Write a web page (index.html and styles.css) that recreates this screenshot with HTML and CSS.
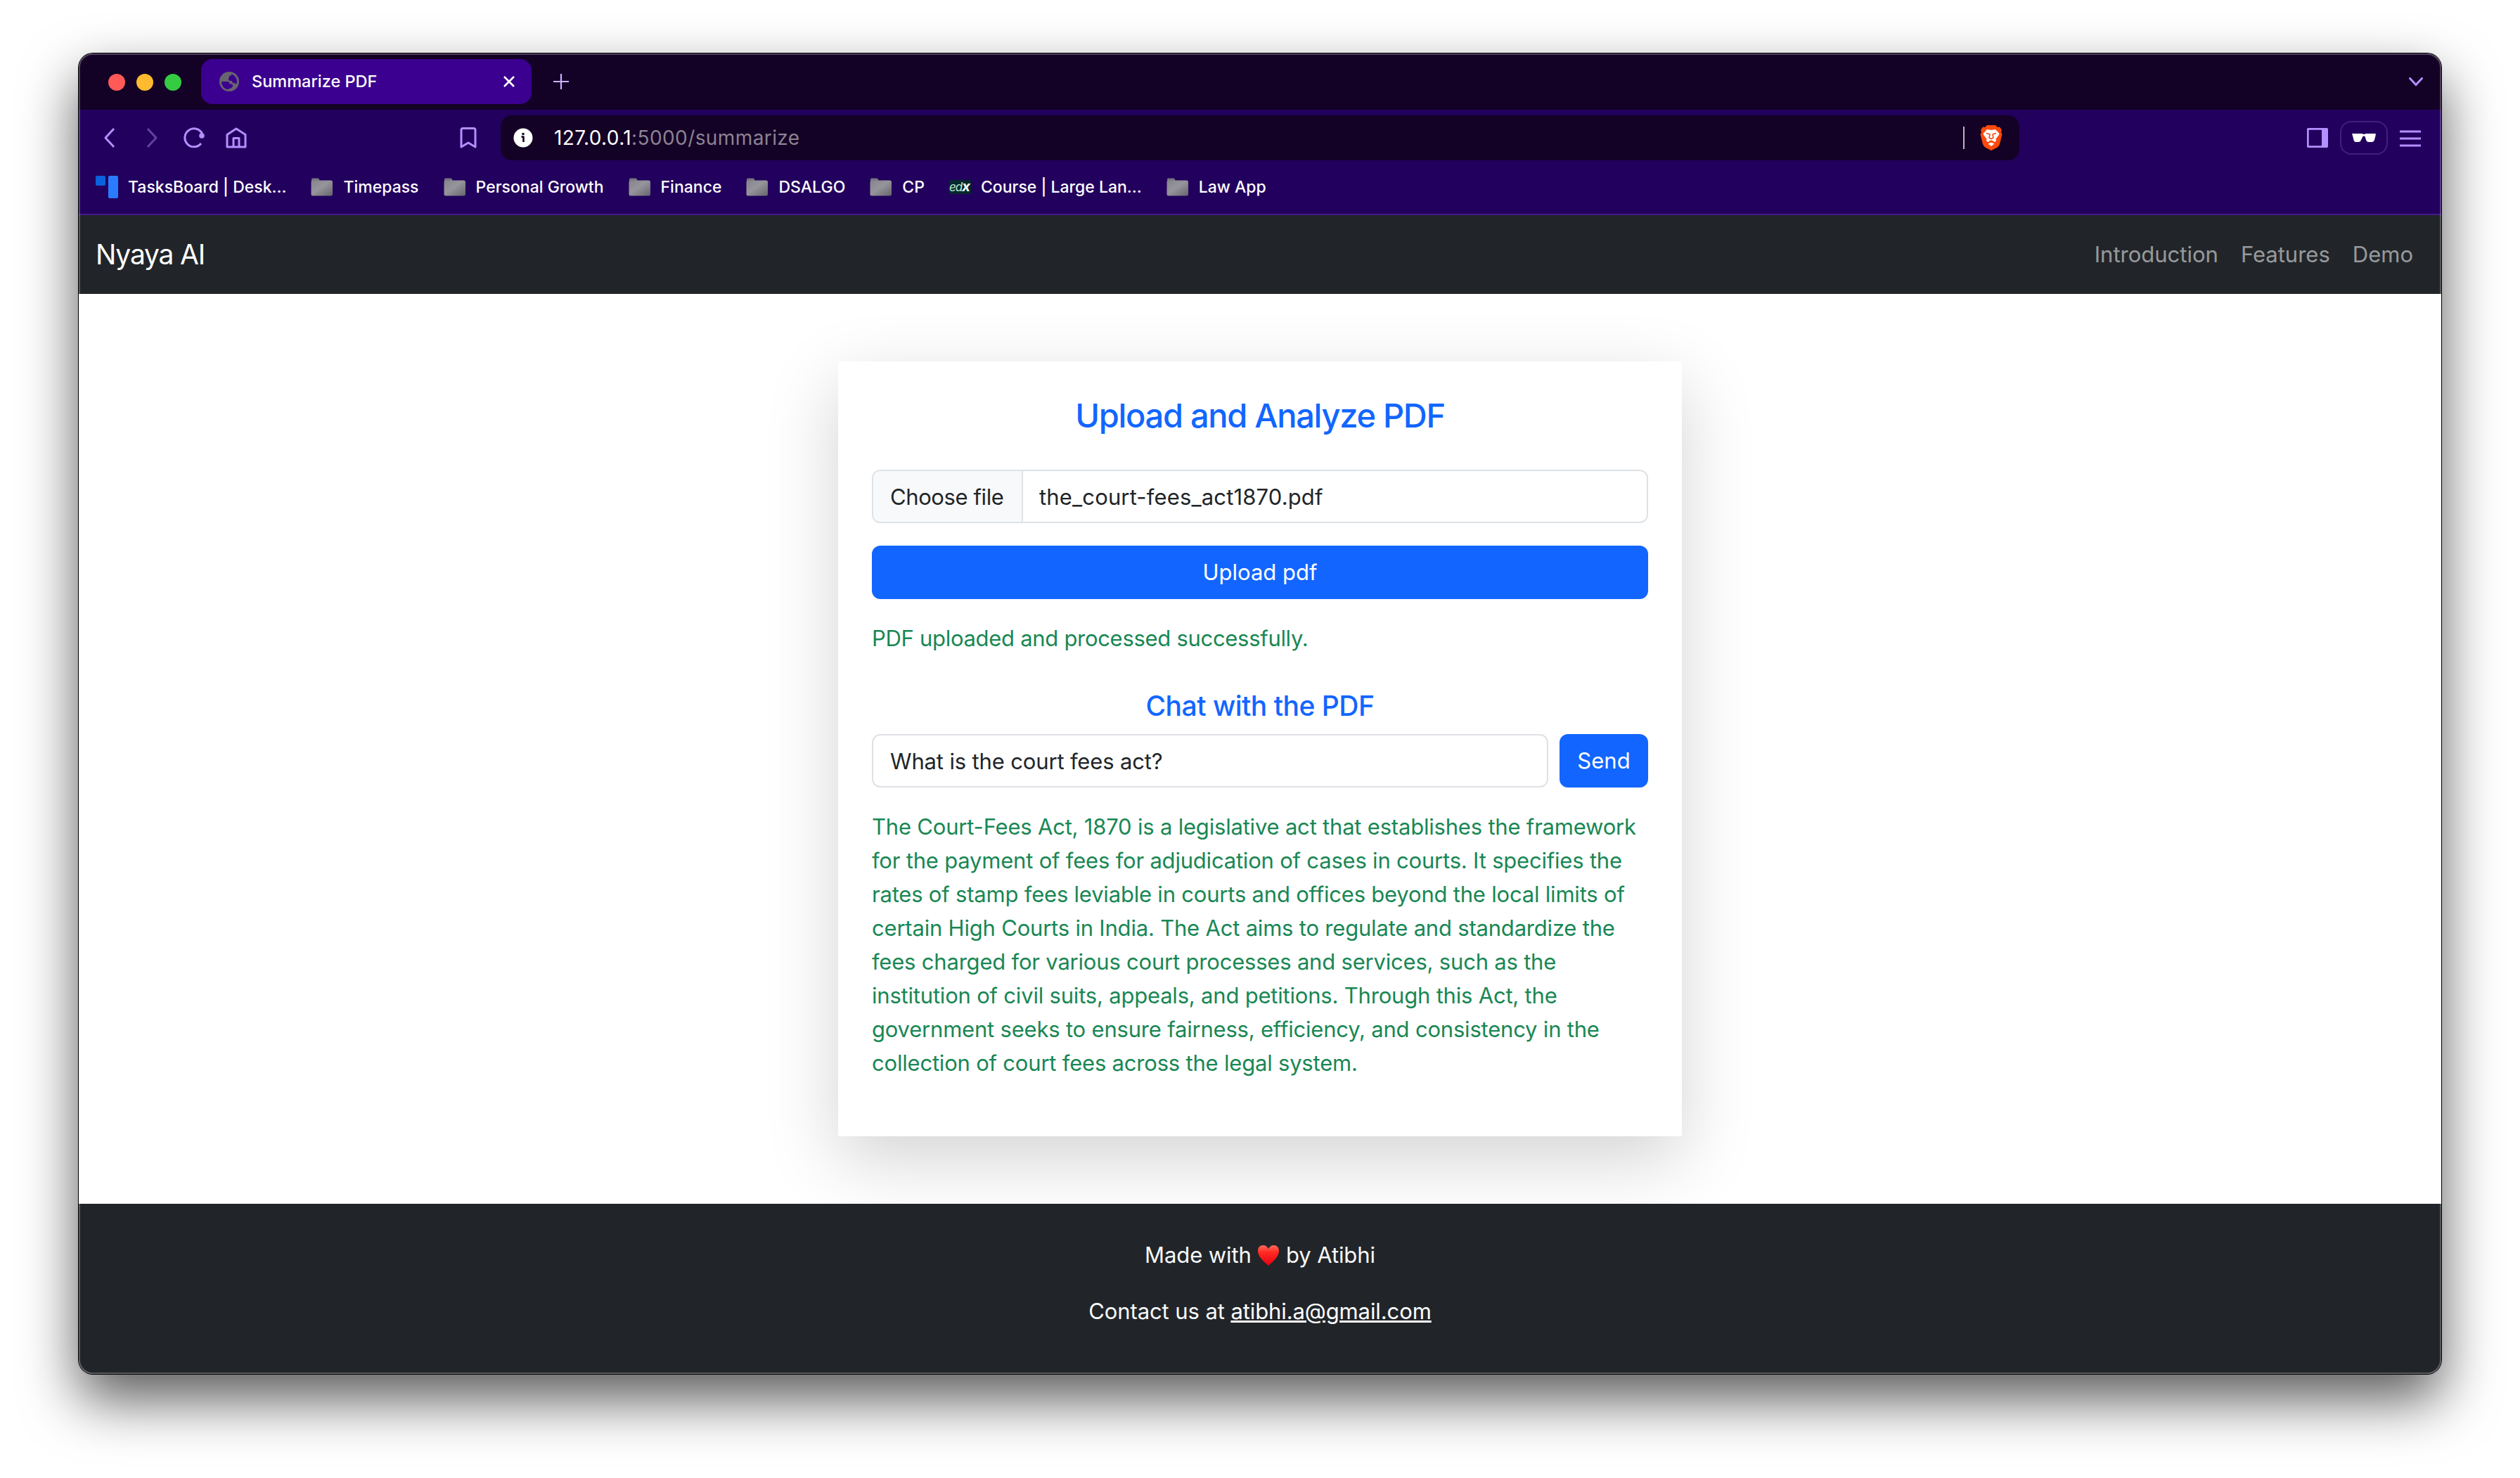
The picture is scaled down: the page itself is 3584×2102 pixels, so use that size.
FILE: index.html
```
<!DOCTYPE html>
<html lang="en">

<head>
    <meta charset="UTF-8">
    <title>Summarize PDF</title>
    <link rel="stylesheet" href="styles.css">
</head>

<body>
    <svg class="defs" width="0" height="0">
        <defs>
            <linearGradient id="folder-fill" x1="0" y1="0" x2="1" y2="1">
                <stop offset="0" stop-color="#85848c" />
                <stop offset="0.45" stop-color="#96959c" />
                <stop offset="1" stop-color="#66656c" />
            </linearGradient>
            <linearGradient id="heart-fill" x1="0" y1="0" x2="0" y2="1">
                <stop offset="0" stop-color="#ff6a5e" />
                <stop offset="0.35" stop-color="#ff2a22" />
                <stop offset="1" stop-color="#e30010" />
            </linearGradient>
            <symbol id="folder" viewBox="0 0 32 26">
                <path d="M1 7V2Q1 .5 2.500 .5H10q1.500 0 2 1.500l.5 2v3z" fill="#77757f" />
                <rect x="0.500" y="3.500" width="30.500" height="22" rx="2.500" fill="url(#folder-fill)" />
            </symbol>
        </defs>
    </svg>

    <div class="window">
        <div class="tab-strip">
            <div class="lights">
                <span class="light red"></span>
                <span class="light yellow"></span>
                <span class="light green"></span>
            </div>
            <div class="tab">
                <svg width="28" height="28" viewBox="0 0 28 28">
                    <circle cx="14" cy="14" r="14" fill="#67646f" />
                    <path d="M3 14h8c2.500 0 3.500 1.500 3.500 3.500h2c2 0 2.500 1 2.500 2.500 0 2-3 4-7 5C7 24.500 3 20 3 14z" fill="#3b008f" />
                    <path d="M17 3.500c4.500 1.300 8 5 8 10.500 0 1-.2 2.500-.6 3.500-1.400-.3-1.900-1.500-3.400-1.500-2.500 0-3-1-3-3h-2c-2 0-3-1-3-2.500s1-2 1-3.500S15.500 5.500 17 5.500z" fill="#3b008f" />
                </svg>
                <span class="tab-title">Summarize PDF</span>
                <svg width="16" height="16" viewBox="0 0 16 16">
                    <path d="M1 1l14 14M15 1L1 15" stroke="#fff" stroke-width="2.600" />
                </svg>
            </div>
            <svg class="new-tab" width="22" height="22" viewBox="0 0 22 22">
                <path d="M11 0v22M0 11h22" stroke="#c9b5ff" stroke-width="2.200" />
            </svg>
            <svg class="tab-menu" width="20" height="13" viewBox="0 0 20 13">
                <path d="M1.500 1.500L10 10.500l8.500-9" fill="none" stroke="#b48fff" stroke-width="3" stroke-linecap="round" />
            </svg>
        </div>

        <div class="toolbar">
            <div class="nav-icons">
                <svg width="30" height="30" viewBox="0 0 30 30">
                    <path d="M21 2L9 15l12 13" />
                </svg>
                <svg class="dim" width="30" height="30" viewBox="0 0 30 30">
                    <path d="M9 2l12 13L9 28" />
                </svg>
                <svg width="30" height="30" viewBox="0 0 30 30">
                    <path d="M25 23A13 13 0 1 1 26.500 9" />
                    <circle cx="26" cy="12" r="3.800" class="solid" />
                </svg>
                <svg width="30" height="30" viewBox="0 0 30 30">
                    <path d="M2 10.500L15 2l13 8.500V28H2zM11 28V15.500h8V28" />
                </svg>
            </div>
            <svg class="bookmark-icon" width="24" height="30" viewBox="0 0 24 30">
                <path d="M2 28V4q0-2.500 2.500-2.500h15Q22 1.500 22 4v24l-10-6z" />
            </svg>
            <div class="address-bar">
                <svg width="28" height="28" viewBox="0 0 28 28">
                    <circle cx="14" cy="14" r="13.500" fill="#fff" />
                    <path d="M11.500 12.500h3v7.500" fill="none" stroke="#140126" stroke-width="2.600" />
                    <circle cx="14" cy="8.500" r="1.800" fill="#140126" />
                </svg>
                <span class="url"><b>127.0.0.1</b>:5000/summarize</span>
                <span class="divider"></span>
                <svg width="32" height="36" viewBox="0 0 32 36">
                    <path d="M10 0h12l3 3 3-.5L31 7l-1 3 1.500 3L28 27q-1 3-4 5l-8 4-8-4q-3-2-4-5L.5 13 2 10 1 7l3-4.500L7 3z" fill="#fb4a0b" />
                    <path d="M10 6l6 1 6-1 5.500 6-1 2.500-4 5 .5 3-2.500 1.500L17 21.500h-2L11.500 24 9 22.500l.5-3-4-5-1-2.500z" fill="#fff" />
                    <path d="M16 24.500l4.500 2-4.500 3.500-4.500-3.500z" fill="#fff" />
                    <path d="M9 11.500l5 1.500-1 5 3 1.500 3-1.500-1-5 5-1.500" fill="none" stroke="#fb4a0b" stroke-width="1.600" />
                </svg>
            </div>
            <div class="right-icons">
                <svg width="30" height="28" viewBox="0 0 30 28">
                    <rect x="1.200" y="1.200" width="27.600" height="25.600" rx="2" />
                    <rect x="21" y="1" width="8" height="26" class="solid" />
                </svg>
                <span class="private">
                    <svg width="34" height="12" viewBox="0 0 34 12">
                        <path d="M1 0h13l3 1 3-1h13l1 .5-.5 2.500-1.500 6q-1 3-4 3h-4q-3 0-4-3l-1.500-5q-1.500-.8-3 0L13 9q-1 3-4 3H6q-3 0-3.500-3L1 3 0 .5z" class="glasses" />
                    </svg>
                </span>
                <svg class="menu" width="30" height="24" viewBox="0 0 30 24">
                    <path d="M0 2h30M0 12h30M0 22h30" />
                </svg>
            </div>
        </div>

        <div class="bookmarks">
            <div class="bookmark">
                <svg width="32" height="32" viewBox="0 0 32 32">
                    <rect width="14" height="14" rx="2" fill="#0a62dc" />
                    <rect x="18" width="14" height="32" rx="2" fill="#2a7cff" />
                </svg>
                <span>TasksBoard | Desk...</span>
            </div>
            <div class="bookmark"><svg width="32" height="26"><use href="#folder" /></svg><span>Timepass</span></div>
            <div class="bookmark"><svg width="32" height="26"><use href="#folder" /></svg><span>Personal Growth</span></div>
            <div class="bookmark"><svg width="32" height="26"><use href="#folder" /></svg><span>Finance</span></div>
            <div class="bookmark"><svg width="32" height="26"><use href="#folder" /></svg><span>DSALGO</span></div>
            <div class="bookmark"><svg width="32" height="26"><use href="#folder" /></svg><span>CP</span></div>
            <div class="bookmark"><i class="edx">ed<b>x</b></i><span>Course | Large Lan...</span></div>
            <div class="bookmark"><svg width="32" height="26"><use href="#folder" /></svg><span>Law App</span></div>
        </div>

        <nav class="navbar">
            <a class="brand">Nyaya AI</a>
            <div class="nav-links">
                <a>Introduction</a>
                <a>Features</a>
                <a>Demo</a>
            </div>
        </nav>

        <main class="content">
            <div class="card">
                <h4>Upload and Analyze PDF</h4>
                <div class="form-control file">
                    <span class="file-button">Choose file</span>
                    <span class="file-name">the_court-fees_act1870.pdf</span>
                </div>
                <div class="button upload">Upload pdf</div>
                <p class="success status">PDF uploaded and processed successfully.</p>
                <h5>Chat with the PDF</h5>
                <div class="chat-row">
                    <div class="form-control question">What is the court fees act?</div>
                    <div class="button send">Send</div>
                </div>
                <p class="success answer">
                    The Court-Fees Act, 1870 is a legislative act that establishes the framework<br>
                    for the payment of fees for adjudication of cases in courts. It specifies the<br>
                    rates of stamp fees leviable in courts and offices beyond the local limits of<br>
                    certain High Courts in India. The Act aims to regulate and standardize the<br>
                    fees charged for various court processes and services, such as the<br>
                    institution of civil suits, appeals, and petitions. Through this Act, the<br>
                    government seeks to ensure fairness, efficiency, and consistency in the<br>
                    collection of court fees across the legal system.
                </p>
            </div>
        </main>

        <footer class="footer">
            <p>Made with <svg class="heart" width="32" height="30" viewBox="0 0 32 30"><path d="M16 30C9 24 1 17 1 9 1 4 4 1 8.500 1 12 1 14.500 3 16 6c1.500-3 4-5 7.500-5C28 1 31 4 31 9c0 8-8 15-15 21z" fill="url(#heart-fill)" /></svg> by Atibhi</p>
            <p>Contact us at <a>atibhi.a@gmail.com</a></p>
        </footer>
    </div>
</body>

</html>
```
FILE: styles.css
```
* {
    box-sizing: border-box;
}

body {
    margin: 0;
    padding: 76px 112px 148px;
    background-color: #fff;
    font-family: Inter, "Liberation Sans", sans-serif;
    font-size: 31px;
    line-height: 48px;
    color: #212529;
}

p, h4, h5 {
    margin: 0;
}

svg {
    display: block;
    flex: none;
}

.defs {
    position: absolute;
}

.window {
    position: relative;
    display: flex;
    flex-direction: column;
    height: 1878px;
    border-radius: 20px;
    overflow: hidden;
    background-color: #fff;
    box-shadow: 0 0 0 1px #000, 0 36px 80px rgba(0, 0, 0, 0.65);
}

/* light rim on the inside of the window */
.window::after {
    content: "";
    position: absolute;
    inset: 0;
    border: 2px solid rgba(255, 255, 255, 0.25);
    border-radius: 20px;
}

.tab-strip {
    display: flex;
    align-items: center;
    height: 80px;
    padding: 0 26px 0 42px;
    background-color: #140126;
}

.lights {
    display: flex;
    gap: 16px;
    margin-top: 2px;
}

.light {
    width: 24px;
    height: 24px;
    border-radius: 50%;
}

.red {
    background-color: #ff5a57;
}

.yellow {
    background-color: #febb2f;
}

.green {
    background-color: #35cb42;
}

.tab {
    display: flex;
    align-items: center;
    width: 470px;
    height: 64px;
    margin-left: 28px;
    padding: 0 24px 0 26px;
    border-radius: 16px;
    background-color: #3b008f;
    color: #fff;
    font-size: 23.5px;
    font-weight: 500;
}

.tab-title {
    margin: 0 auto 0 18px;
}

.new-tab {
    margin-left: 31px;
}

.tab-menu {
    margin-left: auto;
}

.toolbar {
    display: flex;
    align-items: center;
    height: 80px;
    padding: 0 29px;
    background-color: #22005d;
    fill: none;
    stroke: #b48fff;
    stroke-width: 3;
    stroke-linejoin: round;
}

.solid {
    fill: #b48fff;
    stroke: none;
}

.dim {
    opacity: 0.45;
}

.nav-icons {
    display: flex;
    gap: 30px;
}

.bookmark-icon {
    margin-left: 303px;
}

.address-bar {
    display: flex;
    align-items: center;
    width: 2160px;
    height: 64px;
    margin-left: 34px;
    padding: 0 24px 0 18px;
    border-radius: 16px;
    background-color: #140126;
    stroke: none;
}

.url {
    margin: 0 auto 0 30px;
    color: #8b8391;
    font-size: 28px;
    letter-spacing: 0.4px;
}

.url b {
    color: #fff;
    font-weight: 400;
}

.divider {
    width: 2px;
    height: 32px;
    margin-right: 22px;
    background-color: #b9b4be;
}

.right-icons {
    display: flex;
    align-items: center;
    gap: 17px;
    margin-left: auto;
}

.private {
    display: flex;
    align-items: center;
    justify-content: center;
    width: 68px;
    height: 48px;
    border: 2px solid #42207d;
    border-radius: 16px;
}

.glasses {
    fill: #fff;
    stroke: none;
}

.menu {
    margin-top: 1px;
}

.bookmarks {
    display: flex;
    gap: 35px;
    height: 70px;
    padding: 2px 24px 10px;
    border-bottom: 2px solid #431a86;
    background-color: #22005d;
    color: #fff;
    font-size: 23px;
    font-weight: 500;
}

.bookmark {
    display: flex;
    align-items: center;
    gap: 14px;
}

.edx {
    width: 31px;
    height: 20px;
    background-color: #06282f;
    color: #bfeccb;
    font-size: 17px;
    font-weight: 400;
    line-height: 18px;
    letter-spacing: -1px;
}

.edx b {
    color: #fff;
    font-size: 20px;
}

.navbar {
    display: flex;
    align-items: center;
    justify-content: space-between;
    height: 112px;
    padding: 0 40px 0 24px;
    background-color: #212529;
}

.brand {
    color: #fff;
    font-size: 39px;
    letter-spacing: -1.2px;
}

.nav-links {
    display: flex;
    gap: 32px;
    color: rgba(255, 255, 255, 0.55);
}

.content {
    padding: 96px 0;
    background-color: #fff;
}

.card {
    width: 1200px;
    height: 1102px;
    margin: 0 auto;
    padding: 48px;
    background-color: #fff;
    box-shadow: 0 32px 96px rgba(0, 0, 0, 0.175);
}

h4, h5 {
    color: #1266ff;
    font-weight: 500;
    text-align: center;
}

h4 {
    margin-bottom: 48px;
    font-size: 47px;
    line-height: 58px;
    letter-spacing: -1.3px;
}

h5 {
    margin: 48px 0 16px;
    font-size: 39px;
    line-height: 48px;
    letter-spacing: -0.5px;
}

.form-control {
    height: 76px;
    border: 2px solid #dee2e6;
    border-radius: 12px;
    background-color: #fff;
}

.file {
    display: flex;
    overflow: hidden;
    line-height: 73px;
}

.file-button {
    width: 213px;
    padding-left: 24px;
    border-right: 2px solid #dee2e6;
    background-color: #f8f9fa;
    letter-spacing: -0.4px;
}

.file-name {
    padding-left: 23px;
    letter-spacing: 0.15px;
}

.button {
    height: 76px;
    border-radius: 12px;
    background-color: #1266ff;
    color: #fff;
    line-height: 76px;
    text-align: center;
}

.upload {
    margin: 32px 0;
}

.send {
    width: 126px;
}

.success {
    color: #198754;
}

.status {
    letter-spacing: -0.3px;
}

.chat-row {
    display: flex;
    gap: 16px;
}

.question {
    flex: 1;
    padding: 0 24px;
    line-height: 73px;
    letter-spacing: -0.15px;
}

.answer {
    margin-top: 32px;
    letter-spacing: -0.2px;
    white-space: nowrap;
}

.footer {
    flex: 1;
    padding-top: 49px;
    background-color: #212529;
    color: #f8f9fa;
    letter-spacing: -0.1px;
    text-align: center;
}

.footer p {
    margin-bottom: 32px;
}

.footer a {
    color: #fff;
    text-decoration: underline;
}

.heart {
    display: inline-block;
    vertical-align: -4px;
}
```
